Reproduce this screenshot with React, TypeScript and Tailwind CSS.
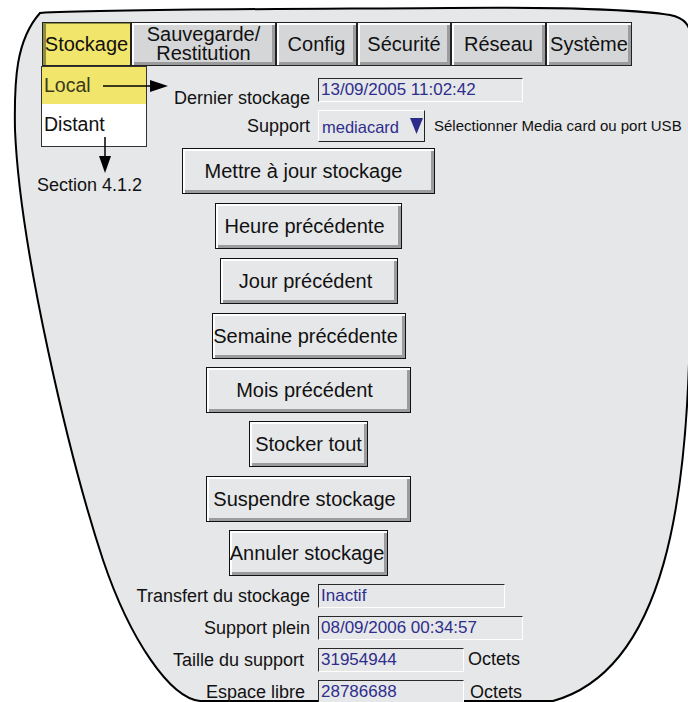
import React from 'react';

const tabs = [
  { label: 'Stockage', w: 'w-[89px]', active: true },
  { label: 'Sauvegarde/\nRestitution', w: 'w-[145px]' },
  { label: 'Config', w: 'w-[81px]' },
  { label: 'Sécurité', w: 'w-[94px]' },
  { label: 'Réseau', w: 'w-[95px]' },
  { label: 'Système', w: 'w-[86px]' },
];

const buttons = [
  { label: 'Mettre à jour stockage', cls: 'mt-[6px] w-[253px] pr-[10px]' },
  { label: 'Heure précédente', cls: 'mt-[9px] w-[187px] pr-[8px]' },
  { label: 'Jour précédent', cls: 'mt-[9px] w-[178px] pr-[6px]' },
  { label: 'Semaine précédente', cls: 'mt-[9px] w-[194px] pr-[6px]' },
  { label: 'Mois précédent', cls: 'mt-[8px] w-[205px] pr-[8px]' },
  { label: 'Stocker tout', cls: 'mt-[8px] w-[119px]' },
  { label: 'Suspendre stockage', cls: 'mt-[9px] w-[205px] pr-[8px]' },
  { label: 'Annuler stockage', cls: 'mt-[8px] w-[159px] pr-[3px]' },
];

function Field({ value, className }: { value: string; className: string }) {
  return (
    <div
      className={`h-[24px] ml-[8px] border border-t-[#2a2a2a] border-l-[#2a2a2a] border-r-white border-b-white bg-[#e6e7e9] px-[2px] text-[17px] leading-[22px] text-[#2e2e8c] whitespace-nowrap ${className}`}
    >
      {value}
    </div>
  );
}

export default function App() {
  return (
    <div
      className="relative w-[688px] h-[702px] bg-white overflow-hidden text-[#111]"
      style={{ fontFamily: '"Liberation Sans", Arial, sans-serif' }}
    >
      {/* fond du panneau */}
      <svg className="absolute inset-0" width="688" height="702" viewBox="0 0 688 702">
        <path
          d="M 40 13 C 100 9, 300 9, 450 8 C 560 7, 640 10, 670 15 C 685 18, 690 25, 692 40 L 690 300 C 690 500, 665 670, 553 701 L 200 701 C 170 698, 130 640, 103 560 C 70 460, 20 250, 15 130 C 14 80, 16 40, 40 13 Z"
          fill="#e6e7e9"
          stroke="#000"
          strokeWidth="2"
        />
      </svg>

      <div className="relative flex flex-col">
        {/* onglets */}
        <div className="ml-[42px] mt-[22px] flex h-[44px]">
          {tabs.map((t) => (
            <div
              key={t.label}
              className={`${t.w} h-full flex items-center justify-center text-center whitespace-pre text-[20px] leading-[19px] border border-[#222] ${
                t.active
                  ? 'bg-[#f1e56b] shadow-[inset_3px_1px_0_#8f8c3c]'
                  : 'bg-[#d5d6d8] shadow-[inset_2px_2px_0_#fff,inset_-3px_-3px_0_#9c9c9c]'
              }`}
            >
              {t.label}
            </div>
          ))}
        </div>

        {/* dernier stockage */}
        <div className="mt-[12px] h-[24px] flex items-start">
          <div className="w-[310px] text-right text-[18px] leading-[22px] mt-[9px]">Dernier stockage</div>
          <Field value="13/09/2005 11:02:42" className="w-[205px]" />
        </div>

        {/* support */}
        <div className="mt-[8px] h-[32px] flex items-center">
          <div className="w-[310px] text-right text-[18px] leading-[22px]">Support</div>
          <div className="ml-[8px] w-[107px] h-[32px] flex items-center justify-between border border-t-white border-l-white border-r-[#222] border-b-[#222] pl-[3px] pr-[1px] bg-[#e6e7e9]">
            <span className="text-[16.5px] text-[#2e2e8c] mt-[3px]">mediacard</span>
            <svg width="13" height="18" viewBox="0 0 13 18">
              <polygon points="0,1 13,1 6.5,17" fill="#2b2b88" />
            </svg>
          </div>
          <span className="ml-[9px] text-[15px]">Sélectionner Media card ou port USB</span>
        </div>

        {/* boutons */}
        <div className="w-[617px] flex flex-col items-center">
          {buttons.map((b) => (
            <div
              key={b.label}
              className={`${b.cls} h-[46px] flex items-center justify-center whitespace-nowrap text-[20px] border border-[#111] bg-[#e6e7e9] shadow-[inset_2px_2px_0_#fff,inset_-3px_-3px_0_#9c9c9c]`}
            >
              {b.label}
            </div>
          ))}
        </div>

        {/* infos support */}
        <div className="mt-[8px] flex flex-col gap-[8px]">
          <div className="flex items-center h-[24px]">
            <div className="w-[310px] text-right text-[18px] leading-[22px] pr-0">Transfert du stockage</div>
            <Field value="Inactif" className="w-[187px]" />
          </div>
          <div className="flex items-center h-[24px]">
            <div className="w-[310px] text-right text-[18px] leading-[22px]">Support plein</div>
            <Field value="08/09/2006 00:34:57" className="w-[205px]" />
          </div>
          <div className="flex items-center h-[24px]">
            <div className="w-[310px] text-right text-[18px] leading-[22px] pr-[6px]">Taille du support</div>
            <Field value="31954944" className="w-[146px]" />
            <span className="ml-[4px] text-[18px] mt-[-2px]">Octets</span>
          </div>
          <div className="flex items-center h-[24px]">
            <div className="w-[310px] text-right text-[18px] leading-[22px] pr-[5px]">Espace libre</div>
            <Field value="28786688" className="w-[146px]" />
            <span className="ml-[6px] text-[18px]">Octets</span>
          </div>
        </div>
      </div>

      {/* menu déroulant Stockage */}
      <div className="absolute left-[41px] top-[66px] w-[106px] border border-[#333] bg-white text-[19.5px]">
        <div className="h-[37px] bg-[#f1e56b] pl-[2px] flex items-center text-[#3a3a1a]">Local</div>
        <div className="h-[42px] pl-[2px] flex items-center">Distant</div>
      </div>

      {/* flèches d'annotation */}
      <svg className="absolute left-0 top-0" width="688" height="702" viewBox="0 0 688 702">
        <line x1="103" y1="86" x2="152" y2="86" stroke="#000" strokeWidth="1.5" />
        <polygon points="150,80 168,86 150,92" fill="#000" />
        <line x1="105" y1="137" x2="105" y2="158" stroke="#000" strokeWidth="1.5" />
        <polygon points="99,156 111,156 105,173" fill="#000" />
      </svg>
      <div className="absolute left-[37px] top-[174px] text-[18px] leading-[22px]">Section 4.1.2</div>
    </div>
  );
}
